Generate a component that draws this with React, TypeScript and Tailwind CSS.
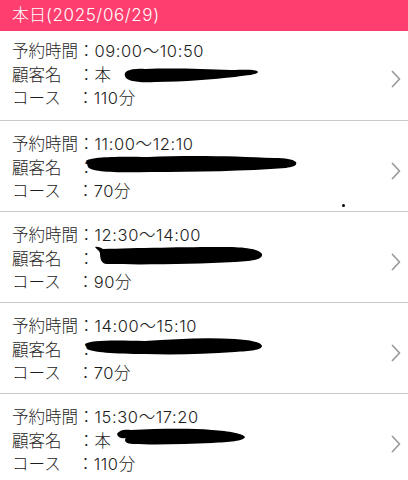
import type { ReactNode } from 'react';

type Blot = { left: number; top: number; w: number; h: number; d: string };

interface Reservation {
  time: string;
  name: string;
  course: string;
  blot: Blot;
  dot?: boolean;
}

const reservations: Reservation[] = [
  {
    time: '09:00〜10:50',
    name: '本',
    course: '110分',
    blot: {
      left: 123,
      top: 36,
      w: 136,
      h: 16,
      d: 'M2,9 C0,4 8,1 22,2 C50,1 80,2 108,3 C122,3 133,2 135,5 C134,8 124,8 112,10 C90,12 62,15 32,15 C14,16 3,14 2,9 Z',
    },
  },
  {
    time: '11:00〜12:10',
    name: '',
    course: '70分',
    dot: true,
    blot: {
      left: 86,
      top: 34,
      w: 213,
      h: 18,
      d: 'M0,6 C3,2 30,1 62,2 C100,0 150,1 188,3 C200,3 206,4 210,7 C212,11 205,12 200,13 C160,16 110,17 64,17 C32,18 5,17 2,12 Z',
    },
  },
  {
    time: '12:30〜14:00',
    name: '',
    course: '90分',
    blot: {
      left: 95,
      top: 34,
      w: 168,
      h: 19,
      d: 'M0,1 C3,0 6,2 8,3 C40,2 90,1 130,1 C150,1 164,3 167,8 C168,13 160,15 140,16 C100,18 50,19 12,18 C6,18 5,12 5,7 C4,4 1,3 0,1 Z',
    },
  },
  {
    time: '14:00〜15:10',
    name: '',
    course: '70分',
    blot: {
      left: 85,
      top: 34,
      w: 178,
      h: 18,
      d: 'M0,7 C4,3 30,3 60,4 C90,2 120,0 150,2 C165,3 176,5 177,9 C177,13 165,14 150,15 C120,17 90,18 60,17 C30,17 6,15 2,12 Z',
    },
  },
  {
    time: '15:30〜17:20',
    name: '本',
    course: '110分',
    blot: {
      left: 117,
      top: 34,
      w: 129,
      h: 17,
      d: 'M0,6 C2,2 8,1 14,2 C40,1 70,0 95,2 C112,3 127,6 128,9 C127,13 112,14 95,15 C70,16 40,17 16,16 C10,16 6,13 9,10 C5,11 1,10 0,6 Z',
    },
  },
];

function Chevron() {
  return (
    <svg width="10" height="18" viewBox="0 0 10 18" className="shrink-0" aria-hidden>
      <path d="M1.5 1.5 L8.5 9 L1.5 16.5" fill="none" stroke="#9d9d9d" strokeWidth="1.8" strokeLinecap="round" strokeLinejoin="round" />
    </svg>
  );
}

function Line({ children }: { children: ReactNode }) {
  return <div className="whitespace-pre">{children}</div>;
}

function ReservationRow({ item, first }: { item: Reservation; first: boolean }) {
  const { blot } = item;
  return (
    <div
      className={
        first
          ? 'relative flex h-[90px] items-start border-b border-[#c9c9c9] pl-3 pr-[7px] pt-[9px]'
          : 'relative flex h-[91px] items-start border-b border-[#c9c9c9] pl-3 pr-[7px] pt-[12px]'
      }
    >
      <div className="flex-1 text-[16.5px] font-light leading-[23.5px] text-[#1c1c1c]">
        <Line>
          予約時間：<span className="tracking-[0.6px]">{item.time}</span>
        </Line>
        <Line>顧客名　：{item.name}</Line>
        <Line>
          コース　：<span className="tracking-[0.6px]">{item.course}</span>
        </Line>
      </div>
      <div className="self-center pb-[3px]">
        <Chevron />
      </div>
      <svg
        className="absolute"
        style={{ left: blot.left, top: blot.top }}
        width={blot.w}
        height={blot.h}
        viewBox={`0 0 ${blot.w} ${blot.h}`}
        aria-hidden
      >
        <path d={blot.d} fill="#000" />
      </svg>
      {item.dot && <span className="absolute left-[342px] top-[83px] h-[3px] w-[3px] rounded-full bg-black" />}
    </div>
  );
}

export default function App() {
  return (
    <div className="h-[480px] w-[408px] overflow-hidden bg-white font-['Inter','Noto_Sans_CJK_JP',sans-serif]">
      <div className="flex h-[31px] items-center bg-[#fe3e6f] px-3 text-[17px] font-light text-white">
        本日<span className="tracking-[0.6px]">(2025/06/29)</span>
      </div>
      {reservations.map((item, i) => (
        <ReservationRow key={item.time} item={item} first={i === 0} />
      ))}
    </div>
  );
}
